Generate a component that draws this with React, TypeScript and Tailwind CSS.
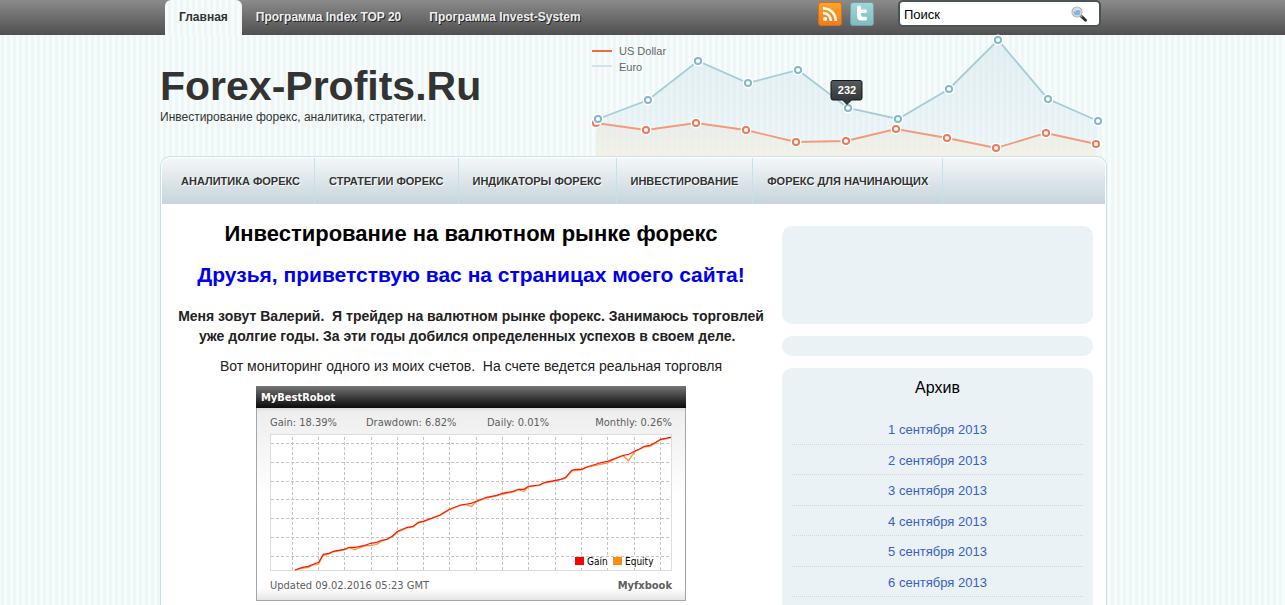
const topLinks = ['Программа Index TOP 20', 'Программа Invest-System'];
const sections = ['АНАЛИТИКА ФОРЕКС', 'СТРАТЕГИИ ФОРЕКС', 'ИНДИКАТОРЫ ФОРЕКС', 'ИНВЕСТИРОВАНИЕ', 'ФОРЕКС ДЛЯ НАЧИНАЮЩИХ'];
const archive = [1, 2, 3, 4, 5, 6].map((d) => `${d} сентября 2013`);

const euro = [[598, 119], [648, 100], [698, 61], [748, 83], [798, 70], [848, 108], [898, 119], [949, 89], [998, 40], [1048, 99], [1098, 121]];
const dollar = [[596, 123], [646, 130], [696, 123], [746, 130], [796, 142], [846, 141], [896, 129], [947, 138], [996, 148], [1046, 133], [1096, 144]];
const toPoints = (list: number[][]) => list.map((p) => p.join(',')).join(' ');

const gain =
  '295,570 301.7,567.7 308.3,566.3 313.3,564.3 318.7,562.3 323.3,554.3 329,553.3 333.3,551.3 344.3,549.3 349.3,547.3 355.3,547.3 365,545.3 370.7,543.3 376.7,542.3 381.7,540.3 386.7,539.3 392.3,536.3 397.7,531.3 407.3,527.3 413.3,526.3 418.3,522.3 423.3,521.3 440,515 449.3,509.3 461,505 471.3,503.3 480,499.7 486.7,497.3 496.7,495.3 502.3,493.3 513.3,491.3 518.3,489.3 524,489.3 528.3,486.3 539.3,485 545,482.3 555.7,480.3 560.7,479.3 565.7,477.3 571.7,470.3 576,469.3 581.7,469.3 586.7,467 602.3,462.3 607.7,461.3 623.3,455.3 629,454.3 634.3,451.3 639.3,449.3 644.3,446.3 650,445.3 655,442.7 660.7,439.3 671,437.3';
const equity =
  '295,570 301.7,568.5 308.3,567.3 313.3,564.8 318.7,564 323.3,555.3 329,554 333.3,551.8 344.3,549.8 349.3,547.8 355.3,549.5 365,545.8 370.7,545.3 376.7,544.5 381.7,541 386.7,539.8 392.3,536.8 397.7,532 407.3,528 413.3,527 418.3,523 423.3,521.8 440,515.5 449.3,510 461,505 467,505 471.3,506.5 476,502 486.7,498 496.7,496 502.3,494.3 513.3,492 518.3,489.8 524,491.3 528.3,487 539.3,485.5 545,482.8 555.7,481 565.7,478.3 571.7,471 581.7,470 586.7,467.5 600,464.3 607.7,463 614,459.5 623.3,455.8 628.5,460.8 634.3,451.8 644.3,447 650,446.3 660.7,439.8 671,437.5';
const gridX = [292.5, 318.5, 344.5, 371.5, 397.5, 423.5, 449.5, 476.5, 502.5, 528.5, 555.5, 581.5, 607.5, 634.5, 660.5];
const gridY = [443.5, 462.5, 481.5, 499.5, 518.5, 537.5, 556.5];

function CurrencyChart() {
  return (
    <svg viewBox="590 35 517 121" className="block h-[121px] w-[517px] shrink-0 overflow-visible" fontFamily="Liberation Sans, Arial, sans-serif" role="img">
      <defs>
        <linearGradient id="euroFill" x1="0" y1="0" x2="0" y2="1">
          <stop offset="0" stopColor="#c8dfe6" stopOpacity=".42" />
          <stop offset="1" stopColor="#dcebf0" stopOpacity=".3" />
        </linearGradient>
        <linearGradient id="dollarFill" x1="0" y1="0" x2="0" y2="1">
          <stop offset="0" stopColor="#e8e6de" stopOpacity=".5" />
          <stop offset="1" stopColor="#f5f0e0" stopOpacity=".65" />
        </linearGradient>
        <linearGradient id="tipFill" x1="0" y1="0" x2="0" y2="1">
          <stop offset="0" stopColor="#555a5d" />
          <stop offset="1" stopColor="#2f3132" />
        </linearGradient>
      </defs>
      <polygon points={`596,156 ${toPoints(euro)} 1098,156`} fill="url(#euroFill)" />
      <polygon points={`596,156 ${toPoints(dollar)} 1096,156`} fill="url(#dollarFill)" />
      <polyline points={toPoints(dollar)} fill="none" stroke="#f29a7c" strokeWidth="1.800" />
      {dollar.map(([x, y]) => (
        <g key={x}>
          <circle cx={x} cy={y} r="5.500" fill="#fff" />
          <circle cx={x} cy={y} r="3.100" fill="#fff" stroke="#e87c5b" strokeWidth="2" />
        </g>
      ))}
      <polyline points={toPoints(euro)} fill="none" stroke="#a5ccd7" strokeWidth="1.800" />
      {euro.map(([x, y]) => (
        <g key={x}>
          <circle cx={x} cy={y} r="5.500" fill="#fff" />
          <circle cx={x} cy={y} r="3.100" fill="#fff" stroke="#86b9c7" strokeWidth="2" />
        </g>
      ))}
      <path d="M833 80.500h27q2 0 2 2v15.500q0 2-2 2h-8.500l-4.500 4.500-4.500-4.500h-9.500q-2 0-2-2v-15.500q0-2 2-2z" fill="url(#tipFill)" stroke="#151617" />
      <text x="847" y="94" textAnchor="middle" fontSize="11" fontWeight="700" fill="#fff">232</text>
      <path d="M592 51h20" stroke="#f26a38" strokeWidth="2" />
      <path d="M592 66h20" stroke="#cfe3e9" strokeWidth="2" />
      <text x="619" y="55" fontSize="11" fill="#666">US Dollar</text>
      <text x="619" y="71" fontSize="11" fill="#666">Euro</text>
    </svg>
  );
}

function RssIcon() {
  return (
    <svg viewBox="0 0 24 24" className="block size-6">
      <defs>
        <linearGradient id="rssFill" x1="0" y1="0" x2="0" y2="1">
          <stop offset="0" stopColor="#fba52a" />
          <stop offset="1" stopColor="#f07c1b" />
        </linearGradient>
      </defs>
      <rect x=".5" y=".5" width="23" height="23" rx="2.500" fill="url(#rssFill)" stroke="#dc6b1c" />
      <circle cx="7.200" cy="17" r="2.100" fill="#fff" />
      <path d="M5 11a8 8 0 0 1 8 8M5 6.200a12.800 12.800 0 0 1 12.800 12.800" fill="none" stroke="#fff" strokeWidth="2.500" />
    </svg>
  );
}

function TwitterIcon() {
  return (
    <svg viewBox="0 0 24 24" className="block size-6">
      <defs>
        <linearGradient id="twFill" x1="0" y1="0" x2="0" y2="1">
          <stop offset="0" stopColor="#a5d6d6" />
          <stop offset="1" stopColor="#7fbcbf" />
        </linearGradient>
      </defs>
      <rect x=".5" y=".5" width="23" height="23" rx="2.500" fill="url(#twFill)" stroke="#68a5aa" />
      <path d="M7 5q0-1.500 2-1.500t2 1.500v2.500h4.500q1.500 0 1.500 1.700t-1.500 1.800h-4.500v2q0 1.800 1.800 1.800h2.700q1.700 0 1.700 1.800t-1.700 1.900h-4q-4.500 0-4.500-4.500z" fill="#fff" />
    </svg>
  );
}

function SearchIcon() {
  return (
    <svg viewBox="0 0 16 16" className="block size-4">
      <path d="M9.500 9.500l5 4.800" stroke="#2d2d2d" strokeWidth="2.800" strokeLinecap="round" />
      <path d="M9 9l2 2" stroke="#999" strokeWidth="1.500" />
      <circle cx="6" cy="6" r="5" fill="#e3eaf0" stroke="#b5b5b5" strokeWidth="1.200" />
      <circle cx="6" cy="6" r="3.500" fill="#87b4dd" />
      <path d="M3.500 5.500a3 3 0 0 1 5-1.500" fill="none" stroke="#d5e8f8" strokeWidth="1.500" />
    </svg>
  );
}

function RobotWidget() {
  return (
    <div className="mx-auto flex w-[430px] flex-col text-left font-['DejaVu_Sans_Condensed','DejaVu_Sans',sans-serif] text-[11px] text-[#5e5e5e]">
      <div className="h-[22px] bg-linear-to-b from-[#777] to-[#0c0c0c] px-[5px] leading-6 font-bold text-white">MyBestRobot</div>
      <div className="border border-t-0 border-[#a5a5a5] bg-[linear-gradient(to_bottom,#ddd_0,#eee_4px,#fff_90px,#fff_180px,#e5e5e5_100%)] px-[13px]">
        <div className="grid h-[26px] grid-cols-[96px_121px_1fr_auto] leading-[30px]">
          <span>Gain: 18.39%</span>
          <span>Drawdown: 6.82%</span>
          <span>Daily: 0.01%</span>
          <span>Monthly: 0.26%</span>
        </div>
        <svg viewBox="270 434 402 137" className="block h-[137px] w-[402px]" fontFamily="DejaVu Sans Condensed, DejaVu Sans, sans-serif" role="img">
          <rect x="270.500" y="434.500" width="401" height="136" fill="#fff" stroke="#ddd" />
          <g stroke="#c4c4c4" strokeDasharray="3 2">
            {gridX.map((x) => <path key={x} d={`M${x} 437V570`} />)}
            {gridY.map((y) => <path key={y} d={`M271 ${y}H671`} />)}
          </g>
          <polyline points={equity} fill="none" stroke="#ff9326" strokeWidth="1.200" />
          <polyline points={gain} fill="none" stroke="#ff1408" strokeWidth="1.200" />
          <rect x="573" y="557" width="85" height="11" fill="#fff" />
          <rect x="575" y="557" width="9" height="8" fill="#f00" />
          <rect x="613" y="557" width="9" height="8" fill="#ff8c12" />
          <text x="587" y="565" fontSize="10" fill="#000">Gain</text>
          <text x="625" y="565" fontSize="10" fill="#000">Equity</text>
        </svg>
        <div className="flex h-[29px] justify-between leading-[30px]">
          <span>Updated 09.02.2016 05:23 GMT</span>
          <a href="#myfxbook" className="font-bold">Myfxbook</a>
        </div>
      </div>
    </div>
  );
}

export default function App() {
  return (
    <div className="flex min-h-screen flex-col bg-[repeating-linear-gradient(to_right,#f5fcfc_0,#f5fcfc_1px,#f0f6f6_1px,#f0f6f6_4px,#f5fcfc_4px,#f5fcfc_6px)] font-['Liberation_Sans',Arial,sans-serif] text-[#222]">
      <div className="h-[35px] bg-linear-to-b from-[#8b8b8b] to-[#505050]">
        <div className="mx-auto flex w-full max-w-[965px] justify-between pr-6 pl-[5px]">
          <nav className="flex text-[12px] leading-[34px] font-bold">
            <a href="#home" className="h-[35px] rounded-t-md bg-[repeating-linear-gradient(to_right,#f5fcfc_0,#f5fcfc_3px,#f0f6f6_3px,#f0f6f6_6px)] px-3.5 text-[#333]">Главная</a>
            {topLinks.map((t) => (
              <a key={t} href="#program" className="px-3.5 text-[#eee] [text-shadow:1px_1px_0_#222]">{t}</a>
            ))}
          </nav>
          <div className="flex items-start">
            <a href="#rss" aria-label="RSS" className="mt-0.5 mr-2"><RssIcon /></a>
            <a href="#twitter" aria-label="Twitter" className="mt-0.5 mr-6"><TwitterIcon /></a>
            <form className="flex h-[27px] w-[203px] items-center rounded-[5px] border-2 border-[#4b5356] bg-white pr-3 pl-1" onSubmit={(e) => e.preventDefault()}>
              <input aria-label="Поиск" defaultValue="Поиск" className="w-0 min-w-0 grow pt-0.5 text-[13px] text-black outline-none" />
              <button type="submit" aria-label="Найти"><SearchIcon /></button>
            </form>
          </div>
        </div>
      </div>

      <div className="mx-auto flex w-full max-w-[965px] grow flex-col pr-[18px]">
        <header className="flex h-[121px] justify-between">
          <div className="pt-[30px]">
            <h1 className="text-[41px] leading-[42px] font-bold whitespace-nowrap text-[#333]">Forex-Profits.Ru</h1>
            <p className="text-[12px] leading-5 text-[#333]">Инвестирование форекс, аналитика, стратегии.</p>
          </div>
          <CurrencyChart />
        </header>

        <div className="flex grow flex-col rounded-t-[10px] border border-b-0 border-[#c3e2e9] bg-white px-px pt-px">
          <nav className="flex h-[46px] rounded-t-lg bg-linear-to-b from-[#f4f7f8] to-[#c6d5db] pl-[5px] text-[11px] leading-[46px] font-bold text-[#333]">
            {sections.map((s) => (
              <a key={s} href="#section" className="border-r border-[#c3e2e9] px-3.5 [text-shadow:1px_1px_0_#fff]">{s}</a>
            ))}
          </nav>
          <div className="flex grow pr-[12px] pl-[13px]">
            <main className="w-[592px] pt-4 text-center">
              <h2 className="text-[22px] leading-7 font-bold text-black">Инвестирование на валютном рынке форекс</h2>
              <h3 className="mt-[13px] text-[21px] leading-7 font-bold text-[#0000f0]">Друзья, приветствую вас на страницах моего сайта!</h3>
              <p className="mt-[17px] text-[14px] leading-5 font-bold">Меня зовут Валерий.&nbsp; Я трейдер на валютном рынке форекс. Занимаюсь торговлей уже долгие годы. За эти годы добился определенных успехов в своем деле.&nbsp;&nbsp;</p>
              <p className="mt-2.5 mb-2.5 text-[14px] leading-5">Вот мониторинг одного из моих счетов.&nbsp; На счете ведется реальная торговля</p>
              <RobotWidget />
            </main>
            <aside className="ml-auto flex w-[311px] flex-col gap-3 pt-[22px] text-center">
              <div className="h-[98px] rounded-[10px] bg-[#eaf2f5]" />
              <div className="h-5 rounded-[10px] bg-[#eaf2f5]" />
              <section className="grow rounded-t-[10px] bg-[#eaf2f5] px-2.5 pt-2.5">
                <h2 className="text-[16px] leading-5 text-black">Архив</h2>
                <ul className="mt-4 text-[13px] leading-normal">
                  {archive.map((a) => (
                    <li key={a} className="border-b border-dotted border-[#d6d6d6] pt-1.5 pb-1"><a href="#archive" className="text-[#3a60c4]">{a}</a></li>
                  ))}
                </ul>
              </section>
            </aside>
          </div>
        </div>
      </div>
    </div>
  );
}
